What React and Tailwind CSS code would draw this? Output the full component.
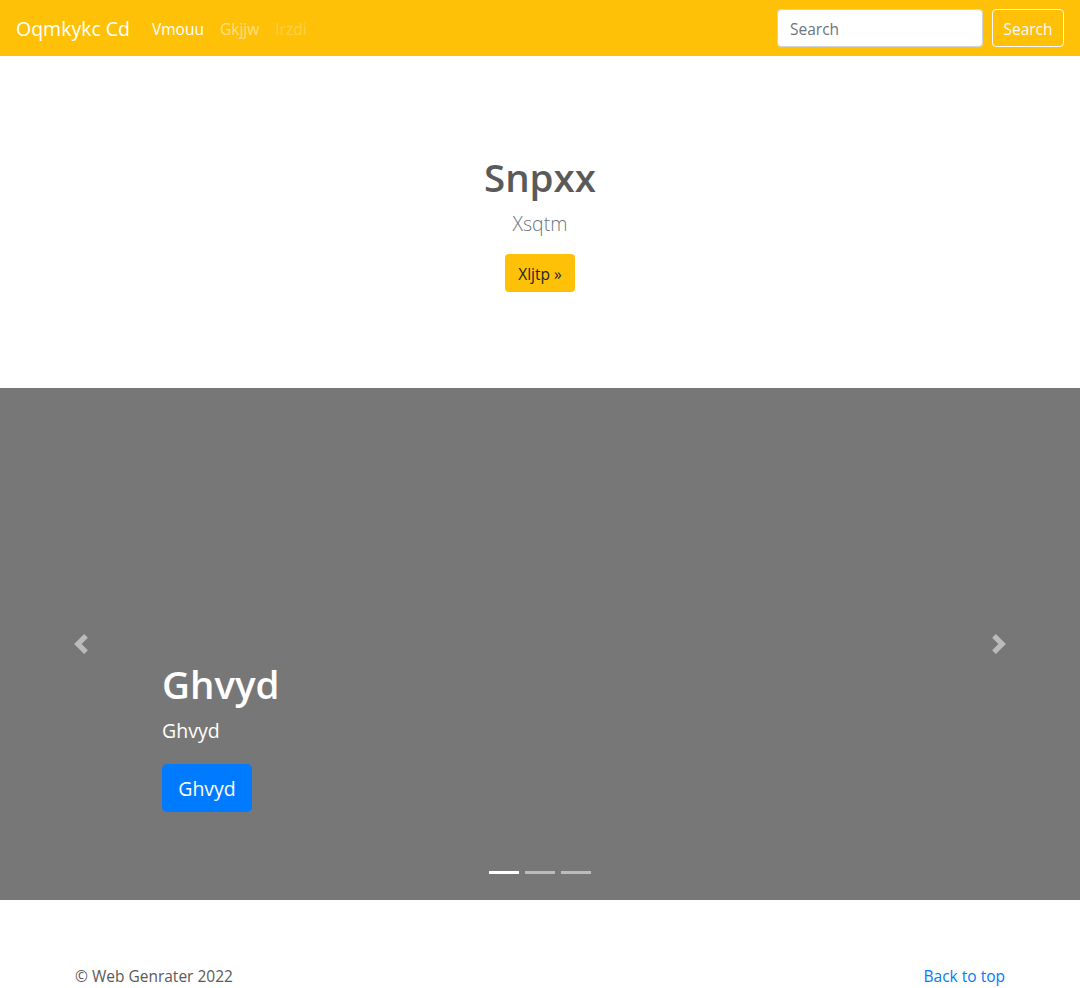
import React from "react";

const font = { fontFamily: '"Open Sans", "Noto Sans", sans-serif' };

function Prev() {
  return (
    <svg width="20" height="20" viewBox="0 0 8 8" fill="#fff">
      <path d="M5.25 0l-4 4 4 4 1.5-1.5L4.25 4l2.5-2.5L5.25 0z" />
    </svg>
  );
}
function Next() {
  return (
    <svg width="20" height="20" viewBox="0 0 8 8" fill="#fff">
      <path d="M2.75 0l-1.5 1.5L3.75 4l-2.5 2.5L2.75 8l4-4-4-4z" />
    </svg>
  );
}

export default function App() {
  return (
    <div className="w-[1080px] min-h-[988px] bg-white text-[#5a5a5a] text-[15.5px] leading-[24px]" style={font}>
      <nav className="h-[56px] bg-[#ffc107] flex items-center px-4">
        <span className="text-white text-[19.5px] leading-[30px] mr-[14px] pt-[2px]">Oqmkykc Cd</span>
        <div className="flex pt-[1px]">
          <span className="px-2 text-white">Vmouu</span>
          <span className="px-2 text-white/50">Gkjjw</span>
          <span className="px-2 text-white/25">Irzdi</span>
        </div>
        <div className="ml-auto flex items-center gap-[9px]">
          <div className="w-[206px] h-[38px] bg-white border border-[#ced4da] rounded-[4px] px-3 pt-[1px] flex items-center text-[#6c757d]">
            Search
          </div>
          <div className="w-[72px] h-[38px] border border-[#f8f9fa] rounded-[4px] pt-[1px] flex items-center justify-center text-[#f8f9fa]">
            Search
          </div>
        </div>
      </nav>

      <section className="h-[332px] flex flex-col items-center pt-[97px]">
        <h1 className="text-[38.5px] leading-[48px] font-semibold text-[#5a5a5a] mb-2">Snpxx</h1>
        <p className="text-[19.5px] leading-[30px] font-light text-[#6c757d] mb-[15px]">Xsqtm</p>
        <div className="h-[38px] w-[70px] pt-[1px] bg-[#ffc107] rounded-[4px] flex items-center justify-center text-[#212529]">Xljtp »</div>
      </section>

      <section className="relative h-[512px] bg-[#777]">
        <div className="absolute left-0 top-0 h-full w-[162px] flex items-center justify-center opacity-50">
          <Prev />
        </div>
        <div className="absolute right-0 top-0 h-full w-[162px] flex items-center justify-center opacity-50">
          <Next />
        </div>
        <div className="absolute left-[162px] right-[162px] bottom-[88px] text-white">
          <h1 className="text-[38.5px] leading-[48px] font-semibold mb-2">Ghvyd</h1>
          <p className="text-[19.5px] leading-[30px] mb-[18px]">Ghvyd</p>
          <div className="inline-flex h-[48px] w-[90px] justify-center pt-[1px] bg-[#007bff] rounded-[5px] items-center text-[19.5px]">Ghvyd</div>
        </div>
        <div className="absolute bottom-[26px] left-0 right-0 flex justify-center gap-[6px]">
          <div className="w-[30px] h-[3px] bg-white" />
          <div className="w-[30px] h-[3px] bg-white/50" />
          <div className="w-[30px] h-[3px] bg-white/50" />
        </div>
      </section>

      <footer className="w-[960px] mx-auto px-[15px] pt-16 flex justify-between">
        <span>© Web Genrater 2022</span>
        <span className="text-[#007bff]">Back to top</span>
      </footer>
    </div>
  );
}
